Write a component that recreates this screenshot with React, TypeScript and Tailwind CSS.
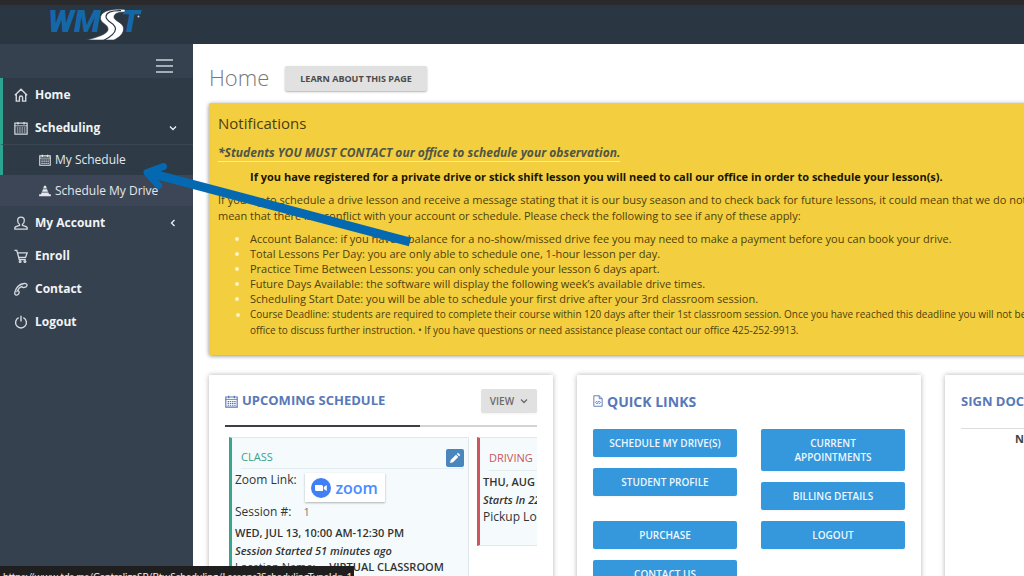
import type { ReactNode } from 'react';

function CalendarIcon({ className }: { className?: string }) {
  return (
    <svg viewBox="0 0 16 16" className={className} fill="none" stroke="currentColor" aria-hidden="true">
      <path d="M1 2.500h14v12.500H1z" strokeWidth="1.400" />
      <path d="M1 5.500h14" strokeWidth="1" />
      <path d="M4.500 1v3M11.500 1v3" strokeWidth="1.600" />
      <path d="M3.200 8h10M3.200 10.300h10M3.200 12.600h10" strokeWidth="1.300" strokeDasharray="1.800 .9" />
    </svg>
  );
}

function HomeIcon() {
  return (
    <svg viewBox="0 0 16 16" className="w-3.5 h-3.5" fill="none" stroke="currentColor" strokeWidth="1.6" aria-hidden="true">
      <path d="M1 8.300 8 1.300l7 7M2.600 7v8h3.600v-4.200q0-1.600 1.800-1.600t1.800 1.600V15h3.600V7" />
    </svg>
  );
}

function ConeIcon() {
  return (
    <svg viewBox="0 0 16 16" className="w-3 h-3" fill="currentColor" aria-hidden="true">
      <path d="M6.800 1h2.400l1.300 3.700h-5zM5.200 5.600h5.600l1.200 3.400H4zM3.500 9.900h9l.9 2.400h2.400V15H.2v-2.700h2.400z" />
    </svg>
  );
}

function UserIcon() {
  return (
    <svg viewBox="0 0 16 16" className="w-3.5 h-3.5" fill="none" stroke="currentColor" strokeWidth="1.5" aria-hidden="true">
      <path d="M6.300 9.500C4.800 8.500 4.200 6.800 4.200 5a3.800 3.800 0 0 1 7.600 0c0 1.800-.6 3.500-2.100 4.500v1.300c1.500.6 4.300 1 5.300 2.200V15H1v-2c1-1.200 3.800-1.600 5.300-2.200z" />
    </svg>
  );
}

function CartIcon() {
  return (
    <svg viewBox="0 0 16 16" className="w-3.5 h-3.5" fill="none" stroke="currentColor" strokeWidth="1.5" aria-hidden="true">
      <path d="M.5 1.500h2.700L6 12h7.500M4.200 4.500H15l-1.800 5H5.500" />
      <circle cx="7" cy="14.200" r="1" />
      <circle cx="12.500" cy="14.200" r="1" />
    </svg>
  );
}

function PhoneIcon() {
  return (
    <svg viewBox="0 0 16 16" className="w-3.5 h-3.5" fill="none" stroke="currentColor" strokeWidth="1.5" aria-hidden="true">
      <path d="M14.800 4.200c.5-1.500-1-2.700-3-2.500C7 2.200 2.500 6 1 11.500c-.7 2.500.7 3.700 2 3.500 2-.3 3.200-2.300 2.800-4-.3-1-1.300-1.300-2-.8C5 7.500 7 5.600 9 5c.2 1 1 1.500 2.200 1.300 1.600-.2 3.200-.9 3.600-2.100z" />
    </svg>
  );
}

function PowerIcon() {
  return (
    <svg viewBox="0 0 16 16" className="w-3.5 h-3.5" fill="none" stroke="currentColor" strokeWidth="1.6" aria-hidden="true">
      <path d="M5.300 3A6.200 6.200 0 1 0 10.700 3M8 .8v6.500" />
    </svg>
  );
}

function CodeFileIcon() {
  return (
    <svg viewBox="0 0 12 14" className="w-2.5 h-3" fill="none" stroke="currentColor" strokeWidth="1.1" aria-hidden="true">
      <path d="M1 .7h6.500L11 4.200v9.100H1zM7.500.7v3.500H11M4.500 7 3 8.700l1.500 1.700M7.500 7 9 8.700l-1.500 1.700M6.500 6.800l-1 3.800" />
    </svg>
  );
}

function Chevron({ className, d }: { className?: string; d: string }) {
  return (
    <svg viewBox="0 0 8 8" className={className} fill="none" stroke="currentColor" strokeWidth="1.3" aria-hidden="true">
      <path d={d} />
    </svg>
  );
}

const DOWN = 'M1 2.500 4 5.500 7 2.500';
const LEFT = 'M5.500 1 2.500 4 5.500 7';

function Logo() {
  return (
    <svg viewBox="0 0 100 38" className="w-[100px] h-[38px]" role="img" aria-label="WMST">
      <g fill="#1568a8" fontFamily="Roboto, sans-serif" fontWeight="900" fontStyle="italic" fontSize="31">
        <text x="2" y="27">W</text>
        <text x="28" y="27">M</text>
        <text x="75" y="27">T</text>
      </g>
      <path
        d="M79 4.500C68 3.500 56 5 54.500 12 53.500 18.500 63 19 62 25c-1 4-10 7-21 10h27c6-3 10-7 9.500-12C77 17 67 16 68 11.500c.7-3.500 5-4.500 11-4.500z"
        fill="#fff"
        stroke="#2b3643"
        strokeWidth=".6"
      />
      <path d="M75 5.700c-9-.2-14.500 1.300-15 5.800-.3 5.500 10 6.500 9.500 12.500-.3 5-6 8.500-12 11.500" fill="none" stroke="#2b3643" strokeWidth="1.200" />
      <circle cx="92.500" cy="11.500" r="1" fill="#cfd8e0" />
    </svg>
  );
}

function NavItem({ icon, label, chevron, dark }: { icon: ReactNode; label: string; chevron?: string; dark?: boolean }) {
  return (
    <a
      href="#"
      className={`flex h-[33px] items-center gap-[7px] pr-4 text-[12px] font-bold text-[#f1f3f5] ${
        dark ? 'border-l-[3px] border-[#2aa58f] bg-[#2f3a47] pl-[11px]' : 'pl-3.5'
      }`}
    >
      <span className="text-[#d5dae0]">{icon}</span>
      <span className="flex-1">{label}</span>
      {chevron && <Chevron className="w-2 h-2" d={chevron} />}
    </a>
  );
}

function Sidebar() {
  return (
    <nav className="w-[193px] shrink-0 bg-[#36414f]">
      <div className="flex h-[34px] items-end justify-end pr-5 pb-[5px]">
        <button type="button" aria-label="Toggle menu" className="flex w-[17px] flex-col gap-1">
          <span className="h-[2px] bg-[#a5adb7]" />
          <span className="h-[2px] bg-[#a5adb7]" />
          <span className="h-[2px] bg-[#a5adb7]" />
        </button>
      </div>
      <NavItem icon={<HomeIcon />} label="Home" dark />
      <NavItem icon={<CalendarIcon className="w-3.5 h-3.5" />} label="Scheduling" chevron={DOWN} dark />
      <a
        href="#"
        className="flex h-[31px] items-center gap-1 border-l-[3px] border-t border-l-[#2aa58f] border-t-[#3b4654] bg-[#2f3a47] pl-9 text-[12px] text-[#e3e7eb]"
      >
        <CalendarIcon className="w-3 h-3" />
        My Schedule
      </a>
      <a href="#" className="flex h-[31px] items-center gap-1 bg-[#3c4657] pl-[39px] text-[12px] text-[#e3e7eb]">
        <ConeIcon />
        Schedule My Drive
      </a>
      <NavItem icon={<UserIcon />} label="My Account" chevron={LEFT} />
      <NavItem icon={<CartIcon />} label="Enroll" />
      <NavItem icon={<PhoneIcon />} label="Contact" />
      <NavItem icon={<PowerIcon />} label="Logout" />
    </nav>
  );
}

const RULES = [
  'Account Balance: if you have a balance for a no-show/missed drive fee you may need to make a payment before you can book your drive.',
  'Total Lessons Per Day: you are only able to schedule one, 1-hour lesson per day.',
  'Practice Time Between Lessons: you can only schedule your lesson 6 days apart.',
  'Future Days Available: the software will display the following week’s available drive times.',
  'Scheduling Start Date: you will be able to schedule your first drive after your 3rd classroom session.',
];

function Notifications() {
  return (
    <section className="h-[252px] whitespace-nowrap rounded-xs bg-[#f3cf3f] px-[9px] pt-2.5 text-[11px] leading-4 text-[#4f400c] shadow-[0_1px_4px_rgba(0,0,0,0.45)]">
      <h2 className="text-[15px] leading-5 text-[#4a3d12]">Notifications</h2>
      <p className="mt-3 text-[12px] font-bold italic leading-4">
        <a href="#" className="border-b border-[#f9ecb0] text-[#4f5547]">
          *Students YOU MUST CONTACT our office to schedule your observation.
        </a>
      </p>
      <p className="mt-2 pl-8 font-bold text-[#1c1503]">
        If you have registered for a private drive or stick shift lesson you will need to call our office in order to schedule your lesson(s).
      </p>
      <p className="mt-[7px]">
        If you try to schedule a drive lesson and receive a message stating that it is our busy season and to check back for future lessons, it could mean that we do not have
        <br />
        mean that there is a conflict with your account or schedule. Please check the following to see if any of these apply:
      </p>
      <ul className="mt-[7px] list-disc pl-8 leading-[15px] marker:text-[#fdf3c4]">
        {RULES.map((rule) => (
          <li key={rule}>{rule}</li>
        ))}
        <li className="text-[10px] leading-4">
          Course Deadline: students are required to complete their course within 120 days after their 1st classroom session. Once you have reached this deadline you will not be able
          <br />
          office to discuss further instruction. • If you have questions or need assistance please contact our office 425-252-9913.
        </li>
      </ul>
    </section>
  );
}

function Card({ children }: { children: ReactNode }) {
  return <section className="h-[220px] min-w-0 bg-white px-4 pt-3.5 shadow-[0_0_5px_rgba(0,0,0,0.3)]">{children}</section>;
}

function UpcomingSchedule() {
  return (
    <Card>
      <div className="flex h-6 items-center gap-1 text-[13px] font-bold text-[#5878b8]">
        <CalendarIcon className="w-[13px] h-[13px]" />
        <h2 className="flex-1 whitespace-nowrap">UPCOMING SCHEDULE</h2>
        <button type="button" className="flex h-6 w-14 items-center justify-center gap-1.5 rounded-xs bg-[#e1e1e1] text-[10px] font-semibold text-[#6a6a6a] shadow-xs">
          VIEW
          <Chevron className="w-2 h-2" d={DOWN} />
        </button>
      </div>
      <div className="mt-3 h-[2px] bg-[#d4d4d4]">
        <div className="h-full w-[195px] bg-[#3c4046]" />
      </div>
      <div className="flex gap-2 overflow-hidden whitespace-nowrap pl-1 pt-2.5 text-[11px] text-[#333]">
        <article className="h-[160px] w-60 shrink-0 border border-l-[3px] border-[#dfe8ea] border-l-[#3aa58c] bg-[#f5fbfc] pl-[3px] pr-1">
          <div className="ml-1.5 flex h-[31px] items-end justify-between border-b border-[#e3ecee] pb-px">
            <h3 className="leading-5 text-[#3f9f86]">CLASS</h3>
            <button type="button" aria-label="Edit class" className="flex h-[18px] w-[18px] items-center justify-center rounded-xs bg-[#4a86be]">
              <svg viewBox="0 0 12 12" className="w-3 h-3" fill="#fff" aria-hidden="true">
                <path d="m1 11 .7-3L7 2.700 9.300 5 4 10.300zM7.800 1.900 9 .8l2.300 2.300-1.200 1.100z" />
              </svg>
            </button>
          </div>
          <div className="flex items-start gap-2">
            <span className="pt-0.5 text-[12px] leading-[18px]">Zoom Link:</span>
            <a href="#" className="mt-1 flex h-[29px] w-20 items-center justify-center gap-1 bg-white text-[16px] font-semibold leading-5 text-[#4a8cff] shadow-[0_1px_2px_rgba(0,0,0,0.3)]">
              <svg viewBox="0 0 20 20" className="w-5 h-5" aria-hidden="true">
                <circle cx="10" cy="10" r="10" fill="#3f80f5" />
                <path d="M4 7h6.500q1.500 0 1.500 1.500V13H5.500Q4 13 4 11.500zM12.800 9l3-2v6l-3-2z" fill="#fff" />
              </svg>
              zoom
            </a>
          </div>
          <p className="mt-0.5 flex gap-3 text-[12px] leading-4">
            <span>Session #:</span>
            <span className="text-[11px] text-[#777]">1</span>
          </p>
          <p className="mt-1 font-semibold leading-[18px]">WED, JUL 13, 10:00 AM-12:30 PM</p>
          <p className="font-semibold italic leading-[18px]">Session Started 51 minutes ago</p>
          <p className="flex gap-3.5 leading-[14px]">
            <span>Location Name:</span>
            <span className="font-semibold">VIRTUAL CLASSROOM</span>
          </p>
        </article>
        <article className="h-[109px] w-60 shrink-0 border border-l-[3px] border-[#dfe8ea] border-l-[#cf5560] bg-[#f5fbfc] pl-[3px]">
          <h3 className="ml-1.5 h-[33px] border-b border-[#e3ecee] pt-2.5 leading-5 text-[#c9545e]">DRIVING</h3>
          <p className="mt-0.5 font-semibold leading-[18px]">THU, AUG 04, 3:00 PM</p>
          <p className="font-semibold italic leading-[18px]">Starts In 22 days</p>
          <p className="text-[12px] leading-4">Pickup Location:</p>
        </article>
      </div>
    </Card>
  );
}

function LinkButton({ children, className = '' }: { children: ReactNode; className?: string }) {
  return (
    <button type="button" className={`rounded-xs bg-[#3598dc] px-3 py-[7px] text-[10px] font-semibold leading-[14px] text-[#eef7fd] shadow-xs ${className}`}>
      {children}
    </button>
  );
}

function QuickLinks() {
  return (
    <Card>
      <h2 className="flex h-6 items-center gap-1 text-[14px] font-bold text-[#5878b8]">
        <CodeFileIcon />
        QUICK LINKS
      </h2>
      <div className="mt-4 grid grid-cols-2 gap-6">
        <div className="flex flex-col gap-[11px]">
          <LinkButton>SCHEDULE MY DRIVE(S)</LinkButton>
          <LinkButton>STUDENT PROFILE</LinkButton>
          <LinkButton className="mt-3.5">PURCHASE</LinkButton>
          <LinkButton>CONTACT US</LinkButton>
        </div>
        <div className="flex flex-col gap-[11px]">
          <LinkButton>CURRENT APPOINTMENTS</LinkButton>
          <LinkButton>BILLING DETAILS</LinkButton>
          <LinkButton>LOGOUT</LinkButton>
        </div>
      </div>
    </Card>
  );
}

function SignDocuments() {
  return (
    <Card>
      <h2 className="h-6 text-[13px] font-bold leading-6 text-[#5878b8]">SIGN DOCUMENTS</h2>
      <p className="mt-[15px] border-t border-[#ddd] pl-[54px] pt-0.5 text-[11px] font-bold leading-4 text-[#444]">No documents to sign</p>
    </Card>
  );
}

// hand-drawn pointer from the notice to the "My Schedule" entry
function PointerArrow() {
  return (
    <svg viewBox="0 0 280 90" className="pointer-events-none absolute left-[138px] top-[157px] h-[90px] w-[280px]" fill="none" stroke="#0569b2" aria-hidden="true">
      <path d="M10 15.500 272 85" strokeWidth="9" />
      <path d="M25.500 9.500 9 15.500 20.500 28.500" strokeWidth="7" strokeLinecap="round" strokeLinejoin="round" />
    </svg>
  );
}

export default function App() {
  return (
    <div className="relative flex h-screen flex-col overflow-hidden bg-white font-['Open_Sans',sans-serif]">
      <header className="h-11 shrink-0 border-t-[5px] border-[#2a2a2c] bg-[#2b3643] pl-[46px]">
        <Logo />
      </header>
      <div className="flex min-h-0 flex-1">
        <Sidebar />
        <main className="min-w-0 flex-1 overflow-hidden pl-4">
          <div className="min-w-[1080px]">
            <div className="flex items-center gap-4 pb-3 pt-[22px]">
              <h1 className="pb-1 text-[22px] font-light leading-5 text-[#777]">Home</h1>
              <button type="button" className="h-[25px] rounded-xs bg-[#e1e1e1] px-[15px] text-[9px] font-bold text-[#4a4a4a] shadow-[0_1px_2px_rgba(0,0,0,0.3)]">
                LEARN ABOUT THIS PAGE
              </button>
            </div>
            <Notifications />
            <div className="mt-5 grid grid-cols-3 gap-6">
              <UpcomingSchedule />
              <QuickLinks />
              <SignDocuments />
            </div>
          </div>
        </main>
      </div>
      <PointerArrow />
      <div className="absolute bottom-0 left-0 h-2.5 w-[354px] overflow-hidden whitespace-nowrap bg-[#1f1f20] pl-[3px] pt-0.5 font-[Lato,sans-serif] text-[10px] leading-4 text-[#f0f0f0]">
        https://www.tds.ms/CentralizeSP/BtwScheduling/Lessons?SchedulingTypeId=-1
      </div>
    </div>
  );
}
